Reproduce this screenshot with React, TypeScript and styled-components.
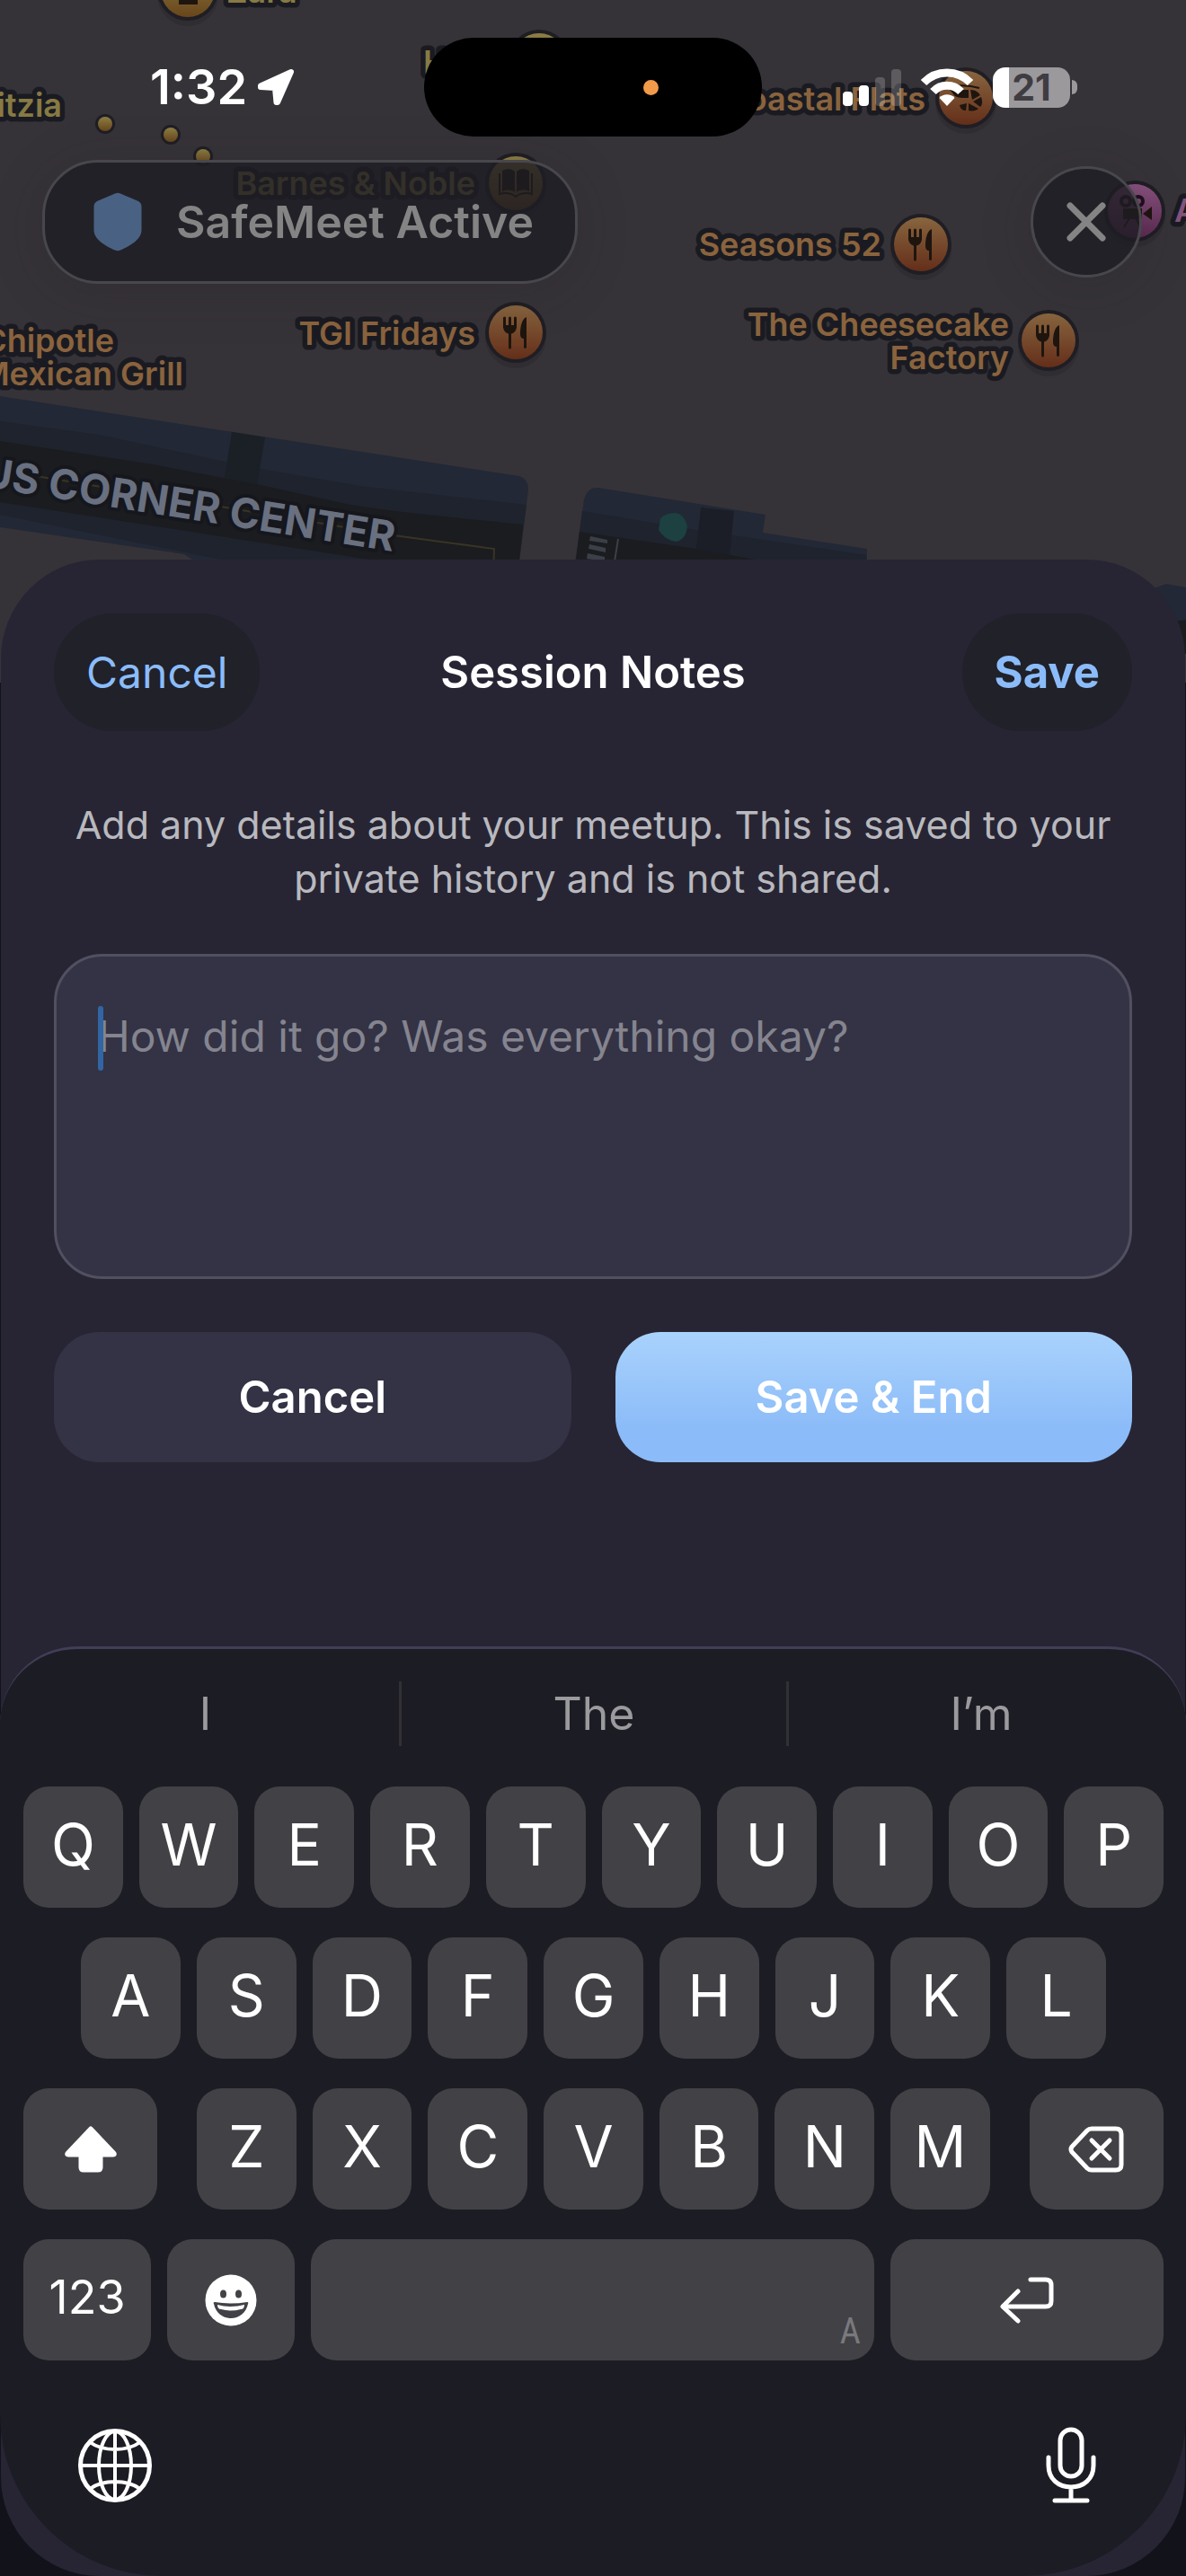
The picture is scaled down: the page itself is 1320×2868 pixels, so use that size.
import { useState } from "react";
import styled, { createGlobalStyle, css } from "styled-components";

interface PinProps {
  x: number;
  y: number;
  tone: "food" | "shop" | "fun";
  children?: React.ReactNode;
}

interface KeyProps {
  $grow?: number;
}

interface ButtonProps {
  $primary?: boolean;
}

const GlobalStyle = createGlobalStyle`
  * {
    box-sizing: border-box;
  }
  body {
    margin: 0;
    background: #12121a;
    font-family: Inter, "Liberation Sans", sans-serif;
  }
  button {
    margin: 0;
    padding: 0;
    border: none;
    background: none;
    font-family: inherit;
    color: inherit;
    cursor: pointer;
  }
`;

const Page = styled.div`
  position: relative;
  display: flex;
  flex-direction: column;
  min-height: 100vh;
  overflow: hidden;
`;

const Map = styled.svg`
  position: absolute;
  top: 0;
  left: 0;
  width: 100%;
  height: 760px;
  background: #363338;
`;

const MapLabel = styled.text<{ $tone: string }>`
  font-size: 36px;
  font-weight: 600;
  fill: ${(props) => props.$tone};
  stroke: #1a1b22;
  stroke-width: 11px;
  stroke-linejoin: round;
  paint-order: stroke;
`;

const AreaLabel = styled.text`
  font-size: 46px;
  font-weight: 700;
  fill: #697080;
  stroke: #15171d;
  stroke-width: 8px;
  stroke-linejoin: round;
  paint-order: stroke;
`;

const StatusBar = styled.div`
  position: relative;
  display: grid;
  grid-template-columns: 1fr 376px 1fr;
  align-items: center;
  padding: 42px 0 26px;
  color: #fff;
`;

const Clock = styled.div`
  display: flex;
  align-items: center;
  gap: 11px;
  padding-left: 167px;
  font-size: 54px;
  font-weight: 600;
  line-height: 60px;
`;

const Island = styled.div`
  display: flex;
  align-items: center;
  justify-content: flex-end;
  height: 110px;
  padding-right: 115px;
  border-radius: 55px;
  background: #000;
`;

const MicDot = styled.span`
  width: 17px;
  height: 17px;
  border-radius: 50%;
  background: #f19a4a;
`;

const Indicators = styled.div`
  display: flex;
  align-items: center;
  justify-content: flex-end;
  gap: 22px;
  padding-right: 121px;
`;

const BatteryBox = styled.div`
  display: flex;
  align-items: center;
  gap: 2px;
`;

const BatteryBody = styled.div`
  display: flex;
  align-items: center;
  justify-content: center;
  width: 86px;
  height: 45px;
  border-radius: 14px;
  background: linear-gradient(90deg, #fff 18px, #9b999c 18px);
  color: #3f3c42;
  font-size: 41px;
  font-weight: 700;
  line-height: 45px;
`;

const BatteryTip = styled.span`
  width: 6px;
  height: 16px;
  border-radius: 0 6px 6px 0;
  background: #9b999c;
`;

const TopRow = styled.div`
  position: relative;
  display: flex;
  align-items: center;
  justify-content: space-between;
  padding: 0 49px 0 47px;
`;

const ActivePill = styled.div`
  display: flex;
  align-items: center;
  gap: 38px;
  height: 138px;
  padding: 0 46px 0 54px;
  border: 3px solid #48474c;
  border-radius: 62px;
  background: rgba(30, 29, 35, 0.8);
  box-shadow: 0 8px 60px rgba(30, 25, 35, 0.2);
  color: #848484;
  font-size: 50px;
  font-weight: 600;
`;

const CloseButton = styled.button`
  display: flex;
  align-items: center;
  justify-content: center;
  width: 124px;
  height: 124px;
  border: 3px solid #48474c;
  border-radius: 50%;
  background: rgba(30, 29, 35, 0.8);
  box-shadow: 0 8px 60px rgba(30, 25, 35, 0.2);
`;

const Sheet = styled.section`
  position: relative;
  flex: 1;
  display: flex;
  flex-direction: column;
  margin: 307px 1px 0;
  border-radius: 110px;
  background: #272534;
`;

const SheetBody = styled.div`
  display: flex;
  flex-direction: column;
  padding: 60px 59px 80px;
`;

const SheetHeader = styled.header`
  display: grid;
  grid-template-columns: 1fr auto 1fr;
  align-items: center;
`;

const SheetTitle = styled.h1`
  margin: 0;
  color: #fff;
  font-size: 49px;
  font-weight: 600;
`;

const PillButton = styled.button<{ $strong?: boolean }>`
  justify-self: ${(props) => (props.$strong ? "end" : "start")};
  height: 131px;
  padding: 0 36px;
  border-radius: 65px;
  background: #202129;
  color: #8bbcf9;
  font-size: ${(props) => (props.$strong ? 49 : 48)}px;
  font-weight: ${(props) => (props.$strong ? 700 : 400)};
`;

const Hint = styled.p`
  margin: 74px 0 54px;
  color: #b9b9be;
  font-size: 43px;
  line-height: 60px;
  text-align: center;
`;

const NotesField = styled.div`
  position: relative;
  display: flex;
`;

const NotesInput = styled.textarea`
  width: 100%;
  height: 362px;
  padding: 59px 46px;
  border: 3px solid #515060;
  border-radius: 54px;
  outline: none;
  resize: none;
  background: #333345;
  color: #fff;
  caret-color: transparent;
  font-family: inherit;
  font-size: 48px;
  line-height: 60px;
  &::placeholder {
    color: #85848f;
    opacity: 1;
  }
`;

const Caret = styled.span`
  position: absolute;
  top: 58px;
  left: 49px;
  width: 6px;
  height: 72px;
  border-radius: 3px;
  background: #3265a3;
`;

const Actions = styled.div`
  display: grid;
  grid-template-columns: 1fr 1fr;
  gap: 49px;
  margin-top: 59px;
`;

const ActionButton = styled.button<ButtonProps>`
  height: 145px;
  border-radius: 50px;
  background: #333345;
  color: #fff;
  font-size: 49px;
  font-weight: 600;
  ${(props) =>
    props.$primary &&
    css`
      background: linear-gradient(180deg, #a9d2fc 0%, #8bbbf8 75%);
    `}
`;

const Keyboard = styled.div`
  margin: auto -1px 0;
  padding: 36px 25px 80px 26px;
  border-top: 3px solid #413e57;
  border-radius: 86px 86px 180px 180px;
  background: #1c1c24;
`;

const Suggestions = styled.div`
  display: grid;
  grid-template-columns: repeat(3, 1fr);
  margin: 0 -11px 45px -13px;
`;

const Suggestion = styled.button`
  height: 72px;
  color: #9b9b9e;
  font-size: 50px;
  line-height: 72px;
  & + & {
    border-left: 3px solid #303035;
  }
`;

const Keys = styled.div`
  display: flex;
  flex-direction: column;
  gap: 33px;
`;

const KeyRow = styled.div<{ $inset?: boolean; $gap?: number }>`
  display: flex;
  gap: ${(props) => props.$gap ?? 18}px;
  padding: 0 ${(props) => (props.$inset ? 64 : 0)}px;
`;

const LetterGroup = styled.div`
  flex: 882;
  display: flex;
  gap: 18px;
`;

const Key = styled.button<KeyProps>`
  flex: ${(props) => props.$grow ?? 1} 1 0;
  display: flex;
  align-items: center;
  justify-content: center;
  min-width: 0;
  height: 135px;
  border-radius: 28px;
  background: #424146;
  color: #fff;
`;

const LetterKey = styled(Key)`
  padding-bottom: 6px;
  font-size: 64px;
`;

const ModeKey = styled(Key)`
  padding-bottom: 6px;
  font-size: 52px;
`;

const SpaceKey = styled(Key)`
  align-items: flex-end;
  justify-content: flex-end;
`;

const SpaceHint = styled.span`
  margin: 0 15px 12px;
  color: #79797d;
  font-family: "Liberation Sans Narrow", "Roboto Condensed", Roboto, sans-serif;
  font-size: 40px;
  line-height: 40px;
`;

const KeyboardFooter = styled.div`
  display: flex;
  align-items: center;
  justify-content: space-between;
  height: 86px;
  margin-top: 74px;
  padding: 0 74px 0 61px;
`;

const IconButton = styled.button`
  display: flex;
  color: #fff;
`;

const Pin = ({ x, y, tone, children }: PinProps) => (
  <g transform={`translate(${x} ${y})`}>
    <circle r="34" cy="6" fill="#1a1820" opacity="0.2" />
    <circle r="34" fill="#1f1e24" />
    <circle r="30" fill={`url(#${tone})`} />
    <g fill="#1e150f" stroke="none">
      {children}
    </g>
  </g>
);

const ForkKnife = () => (
  <>
    <path
      d="M-12.5 -16V-6M-6.5 -16V17M-0.5 -16V-6"
      fill="none"
      stroke="#1e150f"
      strokeWidth="3"
      strokeLinecap="round"
    />
    <path d="M-14 -8H1C1 -1 -2 1 -6.5 2C-11 1 -14 -1 -14 -8Z" />
    <path d="M12 -17V17Q10.500 19 9 17V7Q5 7 5 2C5 -7 7 -15 12 -17Z" />
  </>
);

const MapScene = () => (
  <Map viewBox="0 0 1320 760" preserveAspectRatio="xMidYMin slice" aria-hidden="true">
    <defs>
      <linearGradient id="food" x1="0" y1="0" x2="0" y2="1">
        <stop offset="0" stopColor="#88653f" />
        <stop offset="1" stopColor="#642e19" />
      </linearGradient>
      <linearGradient id="shop" x1="0" y1="0" x2="0" y2="1">
        <stop offset="0" stopColor="#8c7f45" />
        <stop offset="1" stopColor="#69461b" />
      </linearGradient>
      <linearGradient id="fun" x1="0" y1="0" x2="0" y2="1">
        <stop offset="0" stopColor="#87527d" />
        <stop offset="1" stopColor="#5c2a52" />
      </linearGradient>
    </defs>

    {/* shopping center */}
    <path d="M0 441L578 530Q588 533 588 545L576 640H240L205 617L0 587Z" fill="#222835" />
    <path d="M0 469L110 484L251 514L290 522L400 541L586 562L576 640H330L0 573Z" fill="#1e232d" />
    <path d="M0 491L170 517L290 540L390 562Q430 569 582 584L576 640H520L411 623L0 559Z" fill="#1b1c20" />
    <path d="M258 481L295 487L286 540L250 532Z" fill="#1b1f26" />
    <path d="M34 529L438 596L550 611L549 640" fill="none" stroke="#3a3424" strokeWidth="2" />

    {/* side building */}
    <path d="M638 640L650 556Q654 542 666 543L852 573L849 593L965 611V640Z" fill="#222835" />
    <path d="M639 640L648 569L775 590L964 618V640Z" fill="#1e232d" />
    <path d="M639 640L645 592L775 611L850 625V640Z" fill="#1b1c20" />
    <path d="M780 565L817 569L812 618L775 611Z" fill="#1b1e26" />
    <path
      d="M657 597L676 601V605L656 602ZM656 606L674 610V615L655 611ZM654 616L673 620V625L653 622Z"
      fill="#3b3f48"
    />
    <path d="M688 600L684 625" stroke="#3b3f48" strokeWidth="2" />
    <path d="M735 577Q741 571 752 571Q762 573 765 586Q764 600 753 603Q740 602 733 590Z" fill="#1d4041" />

    <path d="M1284 655L1298 650L1320 654V693H1300Z" fill="#222835" />
    <path d="M1300 693L1320 690V728H1300Z" fill="#1b1c20" />

    <AreaLabel transform="translate(437 614) rotate(9)" textAnchor="end">
      US CORNER CENTER
    </AreaLabel>

    <Pin x={209} y={-11} tone="shop">
      <rect x="-10" y="2" width="21" height="14" />
    </Pin>
    <MapLabel $tone="#877a43" x="252" y="3">Zara</MapLabel>

    <MapLabel $tone="#877a43" x="69" y="130" textAnchor="end">Aritzia</MapLabel>
    {[
      [117, 138],
      [190, 150],
      [226, 174],
    ].map(([cx, cy]) => (
      <g key={cx}>
        <circle cx={cx} cy={cy} r="11" fill="#1f1e24" />
        <circle cx={cx} cy={cy} r="8" fill="url(#shop)" />
      </g>
    ))}

    <MapLabel $tone="#877a43" x="471" y="82">H&M</MapLabel>
    <Pin x={600} y={67} tone="shop" />

    <MapLabel $tone="#877a43" x="529" y="217" textAnchor="end">Barnes & Noble</MapLabel>
    <Pin x={574} y={204} tone="shop">
      <path d="M-15 -14C-9 -17 -4 -16 -1 -13V10C-5 7 -10 7 -15 9ZM15 -14C9 -17 4 -16 1 -13V10C5 7 10 7 15 9Z" />
      <path
        d="M-18 -11V12C-12 10 -4 11 0 15C4 11 12 10 18 12V-11"
        fill="none"
        stroke="#1e150f"
        strokeWidth="2"
      />
    </Pin>

    <MapLabel $tone="#8a633d" x="1030" y="123" textAnchor="end">Coastal Flats</MapLabel>
    <Pin x={1075} y={109} tone="food">
      <path
        d="M-20 -12Q-2 -16 15 -11M-17 -9Q-14 -5 -8 -6"
        fill="none"
        stroke="#1e150f"
        strokeWidth="2"
      />
      <path d="M-16 -9H3V0H-4C-12 0 -15 -4 -16 -9Z" />
      <path d="M5 -9C11 -9 14 -6 16 -3L7 2Z" />
      <path d="M17 -1C19 5 18 8 16 10L8 4Z" />
      <path d="M14 12C10 15 6 15 3 14V6Z" />
      <path d="M0 14C-4 14 -6 12 -7 8L1 6Z" />
    </Pin>

    <MapLabel $tone="#8a633d" x="981" y="285" textAnchor="end">Seasons 52</MapLabel>
    <Pin x={1025} y={272} tone="food">
      <ForkKnife />
    </Pin>

    <Pin x={1263} y={235} tone="fun">
      <circle cx="-10" cy="-11" r="5" fill="none" stroke="#1e0f1c" strokeWidth="4" />
      <circle cx="4" cy="-11" r="5" fill="none" stroke="#1e0f1c" strokeWidth="4" />
      <path d="M-13 -3H8V9H-13ZM9 3L19 -5V10Z" />
      <path d="M-6 8L-12 18M1 8L7 18" stroke="#1e0f1c" strokeWidth="2" />
    </Pin>
    <MapLabel $tone="#83537b" x="1307" y="247">AMC</MapLabel>

    <MapLabel $tone="#8a633d" x="529" y="384" textAnchor="end">TGI Fridays</MapLabel>
    <Pin x={574} y={370} tone="food">
      <ForkKnife />
    </Pin>

    <MapLabel $tone="#8a633d" x="1123" y="374" textAnchor="end">The Cheesecake</MapLabel>
    <MapLabel $tone="#8a633d" x="1123" y="411" textAnchor="end">Factory</MapLabel>
    <Pin x={1167} y={379} tone="food">
      <ForkKnife />
    </Pin>

    <MapLabel $tone="#8a633d" x="127" y="392" textAnchor="end">Chipotle</MapLabel>
    <MapLabel $tone="#8a633d" x="204" y="429" textAnchor="end">Mexican Grill</MapLabel>
  </Map>
);

const LocationIcon = () => (
  <svg width="42" height="42" viewBox="0 0 42 42">
    <path
      d="M38 4L4 19.500L4 21L20 22L21.500 38H23Z"
      fill="#fff"
      stroke="#fff"
      strokeWidth="6"
      strokeLinejoin="round"
    />
  </svg>
);

const SignalIcon = () => (
  <svg width="65" height="42" viewBox="0 0 65 42" fill="#fff">
    <rect x="0" y="26" width="11" height="16" rx="4" />
    <rect x="18" y="19" width="11" height="23" rx="4" />
    <rect x="36" y="10" width="11" height="32" rx="4" opacity="0.2" />
    <rect x="54" y="1" width="11" height="41" rx="4" opacity="0.2" />
  </svg>
);

const WifiIcon = () => (
  <svg width="58" height="42" viewBox="0 0 58 42">
    <path d="M3 16A36 36 0 0 1 55 16" fill="none" stroke="#fff" strokeWidth="9" />
    <path d="M13.500 26A21 21 0 0 1 44.500 26" fill="none" stroke="#fff" strokeWidth="9" />
    <path d="M29 42L20.500 33C24 28 34 28 37.500 33Z" fill="#fff" />
  </svg>
);

const ShieldIcon = () => (
  <svg width="54" height="66" viewBox="0 0 54 66">
    <path
      d="M24 1.500Q27 0 30 1.500L50 10Q53.500 12 53.500 16V42C53.500 53 40 60 30 64.500Q27 66 24 64.500C14 60 0.500 53 0.500 42V16Q0.500 12 4 10Z"
      fill="#496283"
    />
  </svg>
);

const CloseIcon = () => (
  <svg width="44" height="44" viewBox="0 0 44 44">
    <path d="M4 4L40 40M40 4L4 40" stroke="#848484" strokeWidth="7" strokeLinecap="round" />
  </svg>
);

const ShiftIcon = () => (
  <svg width="62" height="54" viewBox="0 0 62 54">
    <path
      d="M31 4L57 31.500Q58 33 56 33H42V47Q42 50 39 50H23Q20 50 20 47V33H6Q4 33 5 31.500Z"
      fill="#fff"
      stroke="#fff"
      strokeWidth="5"
      strokeLinejoin="round"
    />
  </svg>
);

const BackspaceIcon = () => (
  <svg width="62" height="52" viewBox="0 0 62 52" fill="none" stroke="#fff" strokeWidth="5" strokeLinecap="round">
    <path d="M26 3H53Q59 3 59 9V43Q59 49 53 49H26Q23 49 21 47L4 29Q2 26 4 23L21 5Q23 3 26 3Z" />
    <path d="M26 16L46 36M46 16L26 36" />
  </svg>
);

const ReturnIcon = () => (
  <svg
    width="60"
    height="52"
    viewBox="0 0 60 52"
    fill="none"
    stroke="#fff"
    strokeWidth="5"
    strokeLinecap="round"
    strokeLinejoin="round"
  >
    <path d="M34 3H51Q57 3 57 9V27Q57 33 51 33H4" />
    <path d="M20 16L3 33L20 49" />
  </svg>
);

const EmojiIcon = () => (
  <svg width="58" height="58" viewBox="0 0 58 58">
    <circle cx="29" cy="29" r="28.500" fill="#fff" />
    <ellipse cx="20.500" cy="22" rx="3.500" ry="4.500" fill="#424146" />
    <ellipse cx="37.500" cy="22" rx="3.500" ry="4.500" fill="#424146" />
    <path d="M11 31Q29 34 47 31Q49 31 48 33C46 43 38 49 29 49C20 49 12 43 10 33Q9 31 11 31Z" fill="#424146" />
    <path d="M14 34Q29 38 44 34Q44 39 40 39Q29 42 18 39Q14 39 14 34Z" fill="#fff" />
  </svg>
);

const GlobeIcon = () => (
  <svg width="82" height="82" viewBox="0 0 82 82" fill="none" stroke="#fff" strokeWidth="4">
    <circle cx="41" cy="41" r="38.500" strokeWidth="5" />
    <ellipse cx="41" cy="41" rx="18" ry="38" />
    <path d="M41 3V79M3 41H79M13 15Q24 23 41 23Q58 23 69 15M13 67Q24 59 41 59Q58 59 69 67" />
  </svg>
);

const MicIcon = () => (
  <svg width="58" height="86" viewBox="0 0 58 86" fill="none" stroke="#fff" strokeWidth="5" strokeLinecap="round">
    <rect x="17" y="3" width="24" height="52" rx="12" />
    <path d="M4 34V43C4 58 15 67 29 67C43 67 54 58 54 43V34M29 67V82M11 82H47" />
  </svg>
);

const suggestions = ["I", "The", "I’m"];

const App = () => {
  const [notes, setNotes] = useState<string>("");

  const typeText = (text: string) => setNotes((current) => current + text);

  const renderLetters = (letters: string) =>
    letters.split("").map((letter) => (
      <LetterKey key={letter} type="button" onClick={() => typeText(letter)}>
        {letter}
      </LetterKey>
    ));

  return (
    <Page>
      <GlobalStyle />
      <MapScene />

      <StatusBar>
        <Clock>
          1:32
          <LocationIcon />
        </Clock>
        <Island>
          <MicDot />
        </Island>
        <Indicators>
          <SignalIcon />
          <WifiIcon />
          <BatteryBox>
            <BatteryBody>21</BatteryBody>
            <BatteryTip />
          </BatteryBox>
        </Indicators>
      </StatusBar>

      <TopRow>
        <ActivePill>
          <ShieldIcon />
          SafeMeet Active
        </ActivePill>
        <CloseButton type="button" aria-label="Close">
          <CloseIcon />
        </CloseButton>
      </TopRow>

      <Sheet>
        <SheetBody>
          <SheetHeader>
            <PillButton type="button">Cancel</PillButton>
            <SheetTitle>Session Notes</SheetTitle>
            <PillButton type="button" $strong>
              Save
            </PillButton>
          </SheetHeader>
          <Hint>
            Add any details about your meetup. This is saved to your private
            history and is not shared.
          </Hint>
          <NotesField>
            <NotesInput
              aria-label="Session notes"
              placeholder="How did it go? Was everything okay?"
              value={notes}
              onChange={(event) => setNotes(event.target.value)}
            />
            {notes === "" && <Caret />}
          </NotesField>
          <Actions>
            <ActionButton type="button">Cancel</ActionButton>
            <ActionButton type="button" $primary>
              Save & End
            </ActionButton>
          </Actions>
        </SheetBody>

        <Keyboard>
          <Suggestions>
            {suggestions.map((word) => (
              <Suggestion key={word} type="button" onClick={() => typeText(`${word} `)}>
                {word}
              </Suggestion>
            ))}
          </Suggestions>
          <Keys>
            <KeyRow>{renderLetters("QWERTYUIOP")}</KeyRow>
            <KeyRow $inset>{renderLetters("ASDFGHJKL")}</KeyRow>
            <KeyRow $gap={44}>
              <Key type="button" $grow={149} aria-label="Shift">
                <ShiftIcon />
              </Key>
              <LetterGroup>{renderLetters("ZXCVBNM")}</LetterGroup>
              <Key
                type="button"
                $grow={149}
                aria-label="Delete"
                onClick={() => setNotes(notes.slice(0, -1))}
              >
                <BackspaceIcon />
              </Key>
            </KeyRow>
            <KeyRow>
              <ModeKey type="button" $grow={142}>
                123
              </ModeKey>
              <Key type="button" $grow={142} aria-label="Emoji">
                <EmojiIcon />
              </Key>
              <SpaceKey type="button" $grow={626} aria-label="Space" onClick={() => typeText(" ")}>
                <SpaceHint>A</SpaceHint>
              </SpaceKey>
              <Key type="button" $grow={304} aria-label="Return" onClick={() => typeText("\n")}>
                <ReturnIcon />
              </Key>
            </KeyRow>
          </Keys>
          <KeyboardFooter>
            <IconButton type="button" aria-label="Next keyboard">
              <GlobeIcon />
            </IconButton>
            <IconButton type="button" aria-label="Dictate">
              <MicIcon />
            </IconButton>
          </KeyboardFooter>
        </Keyboard>
      </Sheet>
    </Page>
  );
};

export default App;
